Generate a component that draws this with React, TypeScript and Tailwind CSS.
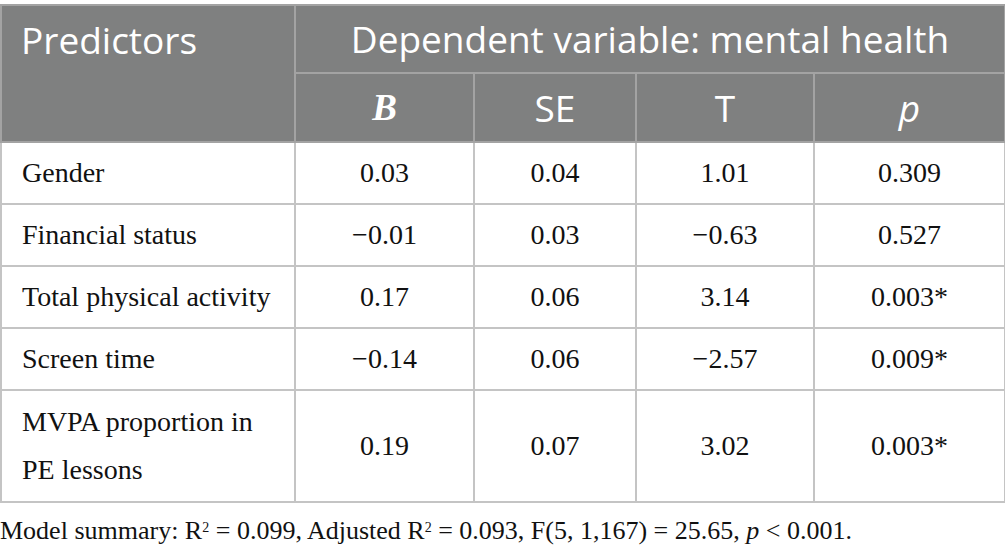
const rows = [
  { name: 'Gender', b: '0.03', se: '0.04', t: '1.01', p: '0.309', h: 'h-[62px]' },
  { name: 'Financial status', b: '\u22120.01', se: '0.03', t: '\u22120.63', p: '0.527', h: 'h-[62px]' },
  { name: 'Total physical activity', b: '0.17', se: '0.06', t: '3.14', p: '0.003*', h: 'h-[62px]' },
  { name: 'Screen time', b: '\u22120.14', se: '0.06', t: '\u22122.57', p: '0.009*', h: 'h-[62px]' },
  { name: 'MVPA proportion in PE lessons', b: '0.19', se: '0.07', t: '3.02', p: '0.003*', h: 'h-[112px]' },
];

const App = () => {
  return (
    <div className="w-[1005px] h-[552px] bg-white pt-[4px]">
      <table className="w-[1004px] table-fixed border-collapse border-2 border-[#c4c4c4]">
        <colgroup>
          <col className="w-[294px]" />
          <col className="w-[179px]" />
          <col className="w-[162px]" />
          <col className="w-[178px]" />
          <col className="w-[191px]" />
        </colgroup>
        <thead className="bg-[#7f8080] text-white font-['Open_Sans',sans-serif] text-[37px]">
          <tr className="h-[68px]">
            <th rowSpan={2} className="align-top text-left font-normal pl-[19px] pt-[6px] border-2 border-[#a3a3a3]">
              Predictors
            </th>
            <th colSpan={4} className="font-normal text-center border-2 border-[#a3a3a3]">
              Dependent variable: mental health
            </th>
          </tr>
          <tr className="h-[69px]">
            <th className="font-['Liberation_Serif',serif] italic font-bold text-center border-2 border-[#a3a3a3]">B</th>
            <th className="font-normal text-center border-2 border-[#a3a3a3]">SE</th>
            <th className="font-normal text-center border-2 border-[#a3a3a3]">T</th>
            <th className="font-normal italic text-center border-2 border-[#a3a3a3]">p</th>
          </tr>
        </thead>
        <tbody className="font-['Liberation_Serif',serif] text-[28px] text-[#111] leading-[48px]">
          {rows.map((r) => (
            <tr key={r.name} className={r.h}>
              <td className="text-left pl-[20px] pr-[4px] border-2 border-[#c4c4c4]">{r.name}</td>
              <td className="text-center border-2 border-[#c4c4c4]">{r.b}</td>
              <td className="text-center border-2 border-[#c4c4c4]">{r.se}</td>
              <td className="text-center border-2 border-[#c4c4c4]">{r.t}</td>
              <td className="text-center border-2 border-[#c4c4c4]">{r.p}</td>
            </tr>
          ))}
        </tbody>
      </table>
      <p className="mt-[11px] font-['Liberation_Serif',serif] text-[26px] text-[#111] leading-[34px]">
        Model summary: R<sup className="text-[14px]">2</sup> = 0.099, Adjusted R<sup className="text-[14px]">2</sup> = 0.093, F(5, 1,167) = 25.65, <i>p</i> &lt; 0.001.
      </p>
    </div>
  );
};

export default App;
